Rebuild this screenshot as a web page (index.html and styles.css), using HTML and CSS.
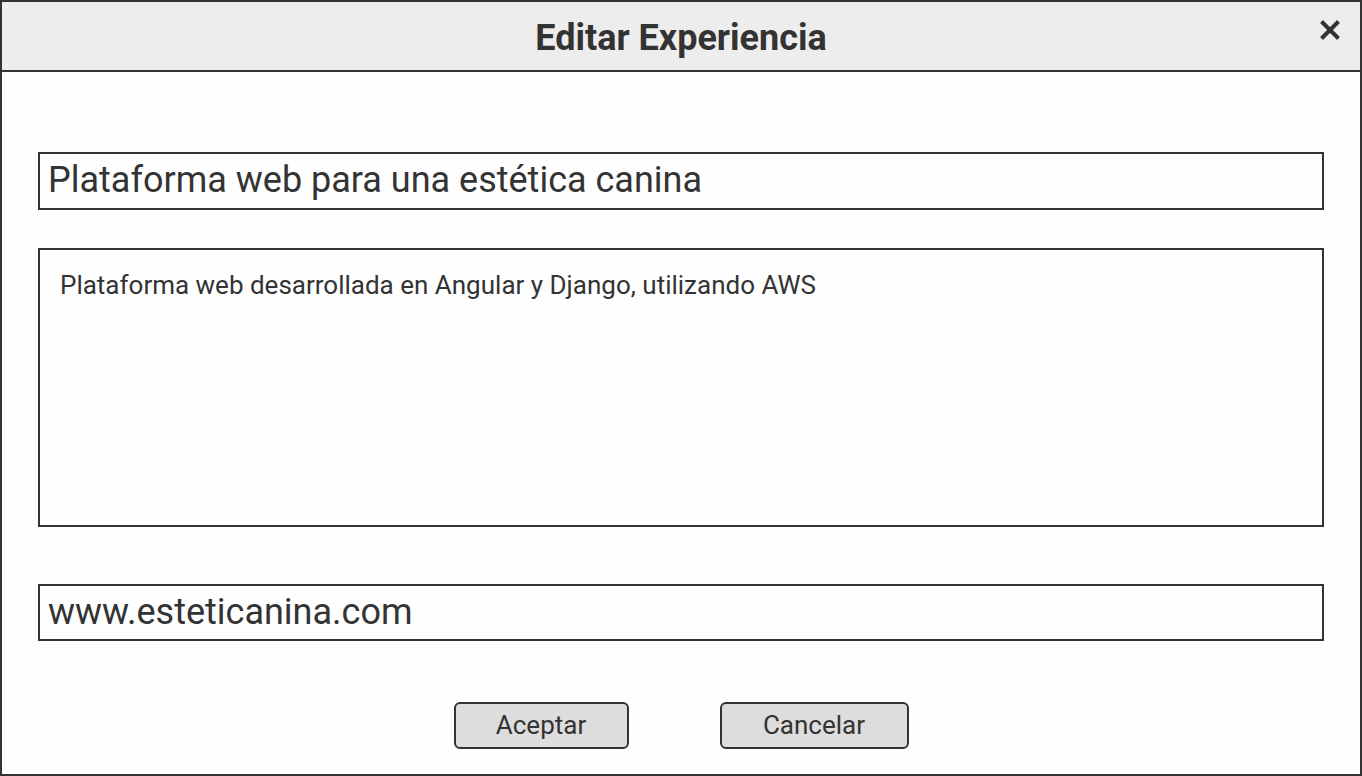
FILE: index.html
```html
<!DOCTYPE html>
<html lang="es">
<head>
<meta charset="utf-8">
<title>Editar Experiencia</title>
<link rel="stylesheet" href="styles.css">
</head>
<body>
<div class="window">
  <div class="header">
    <h1 class="title">Editar Experiencia</h1>
    <span class="close" aria-label="Cerrar">
      <svg width="20" height="20" viewBox="0 0 20 20"><path d="M1.5 1.5 L18.5 18.5 M18.5 1.5 L1.5 18.5" stroke="#333" stroke-width="4" stroke-linecap="butt"/></svg>
    </span>
  </div>
  <div class="content">
    <div class="field field-title">Plataforma web para una estética canina</div>
    <div class="field field-area">Plataforma web desarrollada en Angular y Django, utilizando AWS</div>
    <div class="field field-url">www.esteticanina.com</div>
    <div class="actions">
      <button class="btn btn-ok">Aceptar</button>
      <button class="btn btn-cancel">Cancelar</button>
    </div>
  </div>
</div>
</body>
</html>
```

FILE: styles.css
```css
html, body {
  margin: 0;
  padding: 0;
  background: #fefefe;
}
body {
  font-family: Roboto, "Liberation Sans", sans-serif;
  color: #333;
}
.window {
  width: 1362px;
  height: 776px;
  box-sizing: border-box;
  border: 2px solid #333;
  background: #fefefe;
  display: flex;
  flex-direction: column;
}
.header {
  position: relative;
  height: 68px;
  background: #ededed;
  border-bottom: 2px solid #333;
  display: flex;
  align-items: center;
  justify-content: center;
}
.title {
  margin: 0;
  font-size: 36px;
  font-weight: 700;
  color: #333;
  line-height: 1;
  padding-top: 4px;
}
.close {
  position: absolute;
  right: 20px;
  top: 18px;
  width: 20px;
  height: 20px;
  display: block;
}
.close svg { display: block; }
.content {
  padding: 80px 36px 0 36px;
  display: flex;
  flex-direction: column;
}
.field {
  border: 2px solid #333;
  background: #fefefe;
  box-sizing: border-box;
  color: #333;
}
.field-title {
  height: 58px;
  font-size: 36px;
  line-height: 52px;
  padding: 0 8px;
}
.field-area {
  margin-top: 38px;
  height: 279px;
  font-size: 26px;
  line-height: 30px;
  padding: 20px 20px;
}
.field-url {
  margin-top: 57px;
  height: 57px;
  font-size: 36px;
  line-height: 52px;
  padding: 0 8px;
}
.actions {
  margin-top: 61px;
  display: flex;
  justify-content: center;
  gap: 91px;
}
.btn {
  font-family: Roboto, "Liberation Sans", sans-serif;
  font-size: 26px;
  color: #333;
  background: #dddddd;
  border: 2px solid #333;
  border-radius: 6px;
  height: 47px;
  box-sizing: border-box;
  padding: 0 0 2px 0;
  line-height: 40px;
}
.btn-ok { width: 175px; }
.btn-cancel { width: 189px; }
```
